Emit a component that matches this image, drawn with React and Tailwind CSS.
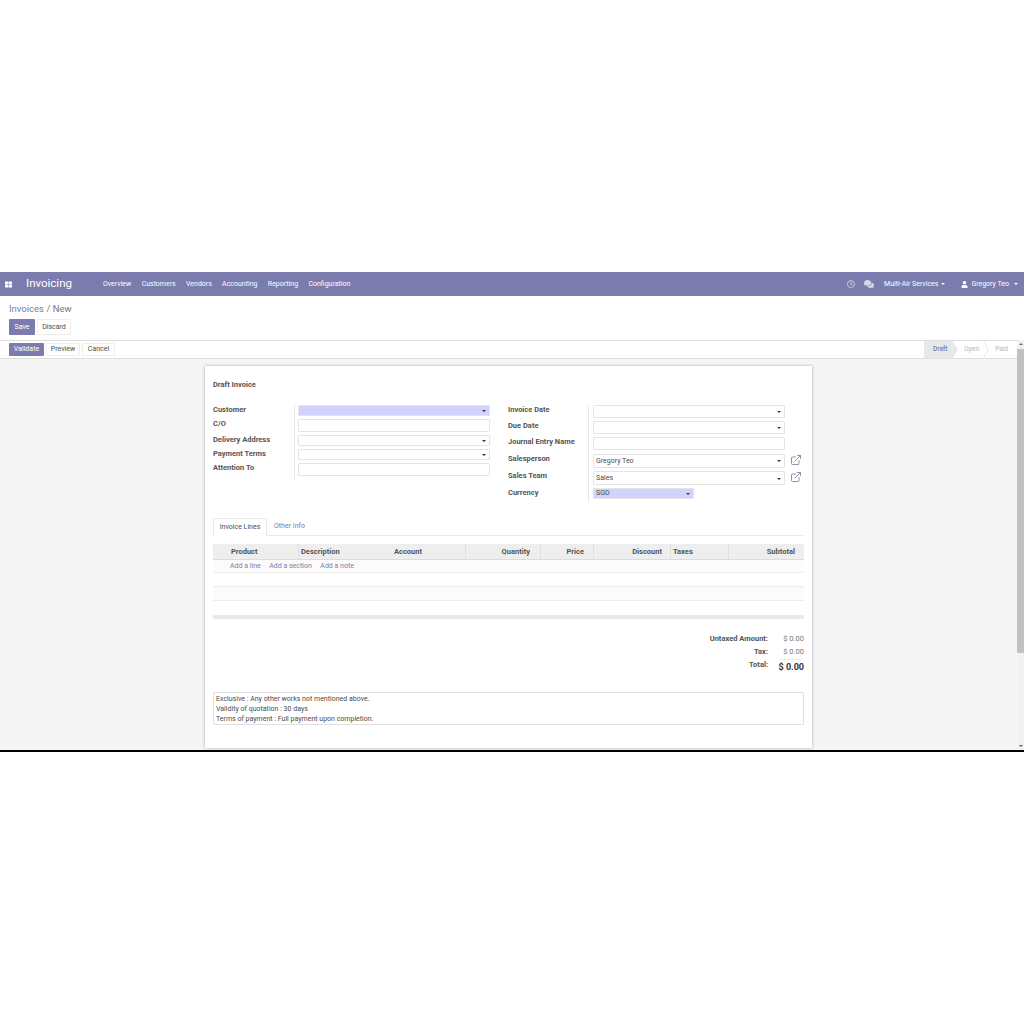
import React from "react";
import { FaThLarge, FaRegClock, FaComments, FaUser } from "react-icons/fa";
import { ExternalLink } from "lucide-react";

const Caret = ({ className = "border-t-[#333]" }) => (
  <span className={`inline-block w-0 h-0 border-x-[2px] border-t-[2px] border-x-transparent ${className}`} />
);

const Input = ({ value, caret, blue, className = "h-[13px]", width = "w-[192px]" }) => (
  <div
    className={`${width} ${className} flex items-center justify-between rounded-[1px] border border-[#e4e4e4] pl-[2px] pr-[3px] text-[7px] text-[#4c4c4c] ${
      blue ? "bg-[#d2d2ff] border-[#d2d2ff]" : "bg-white"
    }`}
  >
    <span>{value}</span>
    {caret && <Caret />}
  </div>
);

const Row = ({ label, h, labelW, pl, children }) => (
  <div className={`flex ${h}`}>
    <div className={`${labelW} text-[7.5px] leading-[10px] font-bold text-[#555]`}>{label}</div>
    <div className={`${pl} flex items-start gap-[5px] border-l border-[#e8e8e8]`}>{children}</div>
  </div>
);

const LinkIcon = () => <ExternalLink size={12} strokeWidth={1.7} className="text-[#7c7bad]" />;

const cellBorder = "border-r border-[#e0e0e0]";

export default function App() {
  return (
    <div className="bg-white min-h-[1024px] font-['Roboto',sans-serif]">
      <div className="h-[272px]" />
      <div className="h-[480px] flex flex-col border-b-2 border-black">
        {/* navbar */}
        <div className="h-[24px] bg-[#7c7bad] flex items-center text-white text-[7px] shrink-0">
          <FaThLarge size={7} className="ml-[5px]" />
          <span className="ml-[14px] text-[11.5px] leading-none">Invoicing</span>
          <div className="ml-[31px] flex gap-[10.3px]">
            <span>Overview</span>
            <span>Customers</span>
            <span>Vendors</span>
            <span>Accounting</span>
            <span>Reporting</span>
            <span>Configuration</span>
          </div>
          <div className="ml-auto flex items-center">
            <FaRegClock size={8} className="opacity-70" />
            <FaComments size={10} className="ml-[9px] opacity-70" />
            <span className="ml-[10px]">Multi-Air Services</span>
            <span className="ml-[3px] flex"><Caret className="border-t-white" /></span>
            <FaUser size={7} className="ml-[16px]" />
            <span className="ml-[3px]">Gregory Teo</span>
            <span className="ml-[5px] mr-[6px] flex"><Caret className="border-t-white" /></span>
          </div>
        </div>

        {/* breadcrumb and save */}
        <div className="h-[44px] shrink-0 pl-[9px] pt-[7px]">
          <div className="text-[9.5px] leading-[11px] text-[#7c7bad]">
            Invoices <span className="text-[#777]">/ New</span>
          </div>
          <div className="mt-[5px] flex gap-[2px] text-[7px]">
            <button className="w-[26px] h-[16px] rounded-[1px] bg-[#7c7bad] text-white">Save</button>
            <button className="w-[34px] h-[16px] rounded-[1px] border border-[#eee] bg-white text-[#4c4c4c]">Discard</button>
          </div>
        </div>

        <div className="flex flex-1 min-h-0">
          <div className="flex-1 flex flex-col min-w-0">
            {/* status bar */}
            <div className="h-[19px] shrink-0 border-y border-[#dedede] flex items-center pl-[9px] bg-white text-[7px]">
              <button className="w-[35px] h-[13px] rounded-[1px] bg-[#7c7bad] text-white">Validate</button>
              <button className="ml-[2px] w-[34px] h-[13px] rounded-[1px] border border-[#eee] text-[#4c4c4c]">Preview</button>
              <button className="ml-[2px] w-[33px] h-[13px] rounded-[1px] border border-[#eee] text-[#4c4c4c]">Cancel</button>
              <div className="ml-auto h-full flex items-center text-[6.5px] text-[#b5b5b5]">
                <div className="w-[34px] h-full bg-[#e8e8ec] pl-[9px] pr-[6px] flex items-center font-medium text-[#7c7bad] [clip-path:polygon(0_0,85%_0,100%_50%,85%_100%,0_100%)]">
                  Draft
                </div>
                <span className="ml-[6px]">Open</span>
                <svg width="6" height="17" viewBox="0 0 6 17" className="ml-[4px]">
                  <path d="M0.5 0 L5.5 8.5 L0.5 17" fill="none" stroke="#e6e6e6" strokeWidth="0.8" />
                </svg>
                <span className="ml-[6px] mr-[9px]">Paid</span>
              </div>
            </div>

            {/* form area */}
            <div className="flex-1 min-h-0 pt-[7px] bg-[#f5f5f5] bg-[repeating-conic-gradient(#f1f1f1_0%_25%,#f9f9f9_0%_50%)] bg-[length:2px_2px]">
              <div className="mx-auto w-[607px] h-[382px] bg-white px-[8px] shadow-[0_0_3px_rgba(0,0,0,0.3)]">
                <div className="pt-[14px] text-[7.5px] leading-[10px] font-bold text-[#555]">Draft Invoice</div>

                <div className="mt-[15px] flex">
                  <div className="w-[295px]">
                    <Row label="Customer" h="h-[14px]" labelW="w-[81px]" pl="pl-[3px]">
                      <Input blue caret className="h-[11px]" />
                    </Row>
                    <Row label="C/O" h="h-[16px]" labelW="w-[81px]" pl="pl-[3px]">
                      <Input />
                    </Row>
                    <Row label="Delivery Address" h="h-[14px]" labelW="w-[81px]" pl="pl-[3px]">
                      <Input caret className="h-[11px]" />
                    </Row>
                    <Row label="Payment Terms" h="h-[14px]" labelW="w-[81px]" pl="pl-[3px]">
                      <Input caret className="h-[11px]" />
                    </Row>
                    <Row label="Attention To" h="h-[16px]" labelW="w-[81px]" pl="pl-[3px]">
                      <Input />
                    </Row>
                  </div>
                  <div>
                    <Row label="Invoice Date" h="h-[16px]" labelW="w-[80px]" pl="pl-[4px]">
                      <Input caret />
                    </Row>
                    <Row label="Due Date" h="h-[16px]" labelW="w-[80px]" pl="pl-[4px]">
                      <Input caret />
                    </Row>
                    <Row label="Journal Entry Name" h="h-[17px]" labelW="w-[80px]" pl="pl-[4px]">
                      <Input />
                    </Row>
                    <Row label="Salesperson" h="h-[17px]" labelW="w-[80px]" pl="pl-[4px]">
                      <Input caret value="Gregory Teo" className="h-[14px]" />
                      <LinkIcon />
                    </Row>
                    <Row label="Sales Team" h="h-[17px]" labelW="w-[80px]" pl="pl-[4px]">
                      <Input caret value="Sales" className="h-[14px] pt-[1px]" />
                      <LinkIcon />
                    </Row>
                    <Row label="Currency" h="h-[14px]" labelW="w-[80px]" pl="pl-[4px]">
                      <Input blue caret value="SGD" className="h-[11px]" width="w-[101px]" />
                    </Row>
                  </div>
                </div>

                {/* tabs */}
                <div className="mt-[16px] h-[18px] flex border-b border-[#e8e8e8] text-[7px]">
                  <div className="w-[54px] h-[18px] flex items-center justify-center rounded-t-[1px] border border-b-white border-[#e8e8e8] text-[#4c4c4c]">
                    Invoice Lines
                  </div>
                  <div className="ml-[7px] flex items-center text-[#7c7bad]">Other Info</div>
                </div>

                {/* lines table */}
                <div className="mt-[8px]">
                  <div className="h-[16px] grid grid-cols-[86px_93px_74px_75px_53px_77px_58px_74px] items-center bg-[#eeeeee] border-b border-[#dcdcdc] text-[7.5px] font-bold text-[#555]">
                    <div className={`h-full flex items-center pl-[18px] ${cellBorder}`}>Product</div>
                    <div className="h-full flex items-center pl-[2px]">Description</div>
                    <div className={`h-full flex items-center pl-[2px] ${cellBorder}`}>Account</div>
                    <div className={`h-full flex items-center justify-end pr-[10px] ${cellBorder}`}>Quantity</div>
                    <div className={`h-full flex items-center justify-end pr-[9px] ${cellBorder}`}>Price</div>
                    <div className={`h-full flex items-center justify-end pr-[8px] ${cellBorder}`}>Discount</div>
                    <div className={`h-full flex items-center pl-[2px] ${cellBorder}`}>Taxes</div>
                    <div className="h-full flex items-center justify-end pr-[8px]">Subtotal</div>
                  </div>
                  <div className="h-[13px] flex items-center gap-[8.5px] pl-[17px] pt-[1px] bg-[#fbfbfb] border-b border-[#eeeeee] text-[7px] text-[#7c7bad]">
                    <span>Add a line</span>
                    <span>Add a section</span>
                    <span>Add a note</span>
                  </div>
                  <div className="h-[14px] bg-white border-b border-[#eeeeee]" />
                  <div className="h-[14px] bg-[#fbfbfb] border-b border-[#eeeeee]" />
                  <div className="h-[14px] bg-white" />
                  <div className="h-[4px] bg-[#e9e9e9]" />
                </div>

                {/* totals */}
                <div className="mt-[14px] flex justify-end text-[7.5px]">
                  <div className="flex flex-col items-end font-bold text-[#555] leading-[11px] gap-[2px]">
                    <span>Untaxed Amount:</span>
                    <span>Tax:</span>
                    <span>Total:</span>
                  </div>
                  <div className="ml-[11px] flex flex-col items-end text-[#777] leading-[11px] gap-[2px]">
                    <span>$ 0.00</span>
                    <span>$ 0.00</span>
                    <span className="w-[25px] whitespace-nowrap flex justify-end border-t border-[#eeeeee] text-[9px] leading-[14px] font-bold text-[#333]">$ 0.00</span>
                  </div>
                </div>

                {/* terms */}
                <div className="mt-[18px] w-[591px] h-[33px] rounded-[1px] border border-[#e0e0e0] pl-[2px] pt-[1px] text-[7px] leading-[10px] text-[#4c4c4c]">
                  <div>Exclusive : Any other works not mentioned above.</div>
                  <div>Validity of quotation : 30 days</div>
                  <div>Terms of payment : Full payment upon completion.</div>
                </div>
              </div>
            </div>
          </div>

          {/* scrollbar */}
          <div className="w-[7px] shrink-0 bg-[#f1f1f1] flex flex-col items-center pt-[3px] pb-[3px]">
            <span className="w-0 h-0 border-x-[2px] border-b-[2px] border-x-transparent border-b-[#666]" />
            <div className="mt-[4px] w-full h-[304px] bg-[#c1c1c1]" />
            <span className="mt-auto w-0 h-0 border-x-[2px] border-t-[2px] border-x-transparent border-t-[#666]" />
          </div>
        </div>
      </div>
    </div>
  );
}
